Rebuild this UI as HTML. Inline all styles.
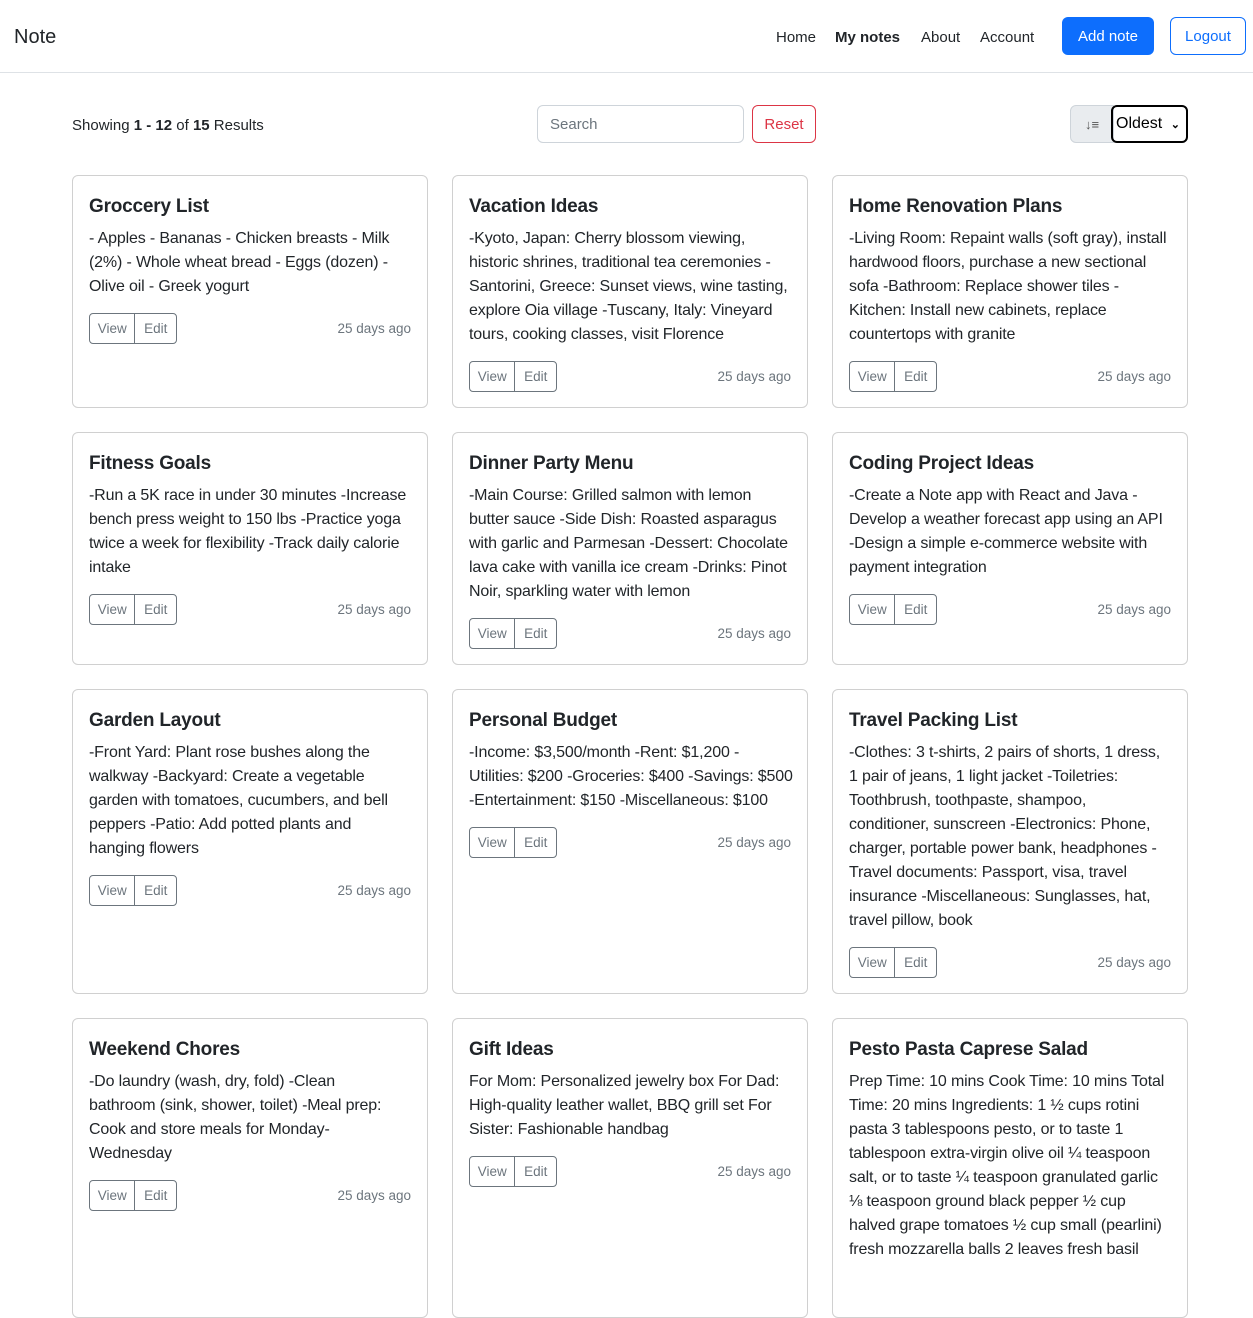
<!DOCTYPE html>
<html><head><meta charset="utf-8">
<style>
*{box-sizing:border-box;margin:0;padding:0}
body{width:1253px;height:1265px;overflow:hidden;background:#fff;font-family:"Liberation Sans",sans-serif;color:#212529;position:relative}
.nav{position:absolute;left:0;top:0;width:1253px;height:73px;border-bottom:1px solid #dee2e6}
.brand{position:absolute;left:14px;top:26px;font-size:20px}
.links{position:absolute;top:29px;font-size:15px}
.b{position:absolute;border-radius:6px;font-size:15px;display:flex;align-items:center;justify-content:center}
.card{position:absolute;width:356px;border:1px solid #d0d0d0;border-radius:6px;padding:19px 16px 16px}
.card h5{font-size:19px;font-weight:bold;line-height:24px;margin-bottom:8px;white-space:nowrap;letter-spacing:-0.2px}
.card p{font-size:16px;line-height:24px;white-space:nowrap;letter-spacing:-0.15px}
.ft{position:relative;height:31px;margin-top:14px}
.grp{display:flex;border:1px solid #6c757d;border-radius:4px;width:88px;height:31px;font-size:13.5px;color:#6c757d}
.grp span{display:flex;align-items:center;justify-content:center}
.grp span:first-child{width:46px;border-right:1px solid #6c757d}
.grp span:last-child{width:41px}
.ago{position:absolute;right:0;top:8px;font-size:13.5px;color:#6c757d}
</style></head><body>
<div class="nav">
<div class="brand">Note</div>
<div class="links" style="left:776px">Home</div>
<div class="links" style="left:835px;font-weight:bold">My notes</div>
<div class="links" style="left:921px">About</div>
<div class="links" style="left:980px">Account</div>
<div class="b" style="left:1062px;top:17px;width:92px;height:38px;background:#0d6efd;color:#fff">Add note</div>
<div class="b" style="left:1170px;top:17px;width:76px;height:38px;border:1px solid #0d6efd;color:#0d6efd">Logout</div>
</div>
<div style="position:absolute;left:72px;top:117px;font-size:15px">Showing <b>1 - 12</b> of <b>15</b> Results</div>
<div class="b" style="left:537px;top:105px;width:207px;height:38px;border:1px solid #ced4da;color:#6c757d;justify-content:flex-start;padding-left:12px">Search</div>
<div class="b" style="left:752px;top:105px;width:64px;height:38px;border:1px solid #dc3545;color:#dc3545">Reset</div>
<div class="b" style="left:1070px;top:105px;width:44px;height:38px;background:#e9ecef;border:1px solid #ced4da;border-radius:6px 0 0 6px;font-size:13px;color:#555">↓&#8801;</div>
<div class="b" style="left:1111px;top:105px;width:77px;height:38px;border:2px solid #000;color:#000;justify-content:flex-start;padding-left:3px;font-size:16px">Oldest<span style="position:absolute;right:6px;font-size:11px;font-weight:bold">&#8964;</span></div>

<div class="card" style="left:72px;top:175px;height:233px"><h5>Groccery List</h5><p>- Apples - Bananas - Chicken breasts - Milk<br>(2%) - Whole wheat bread - Eggs (dozen) -<br>Olive oil - Greek yogurt</p><div class="ft"><div class="grp"><span>View</span><span>Edit</span></div><div class="ago">25 days ago</div></div></div>
<div class="card" style="left:452px;top:175px;height:233px"><h5>Vacation Ideas</h5><p>-Kyoto, Japan: Cherry blossom viewing,<br>historic shrines, traditional tea ceremonies -<br>Santorini, Greece: Sunset views, wine tasting,<br>explore Oia village -Tuscany, Italy: Vineyard<br>tours, cooking classes, visit Florence</p><div class="ft"><div class="grp"><span>View</span><span>Edit</span></div><div class="ago">25 days ago</div></div></div>
<div class="card" style="left:832px;top:175px;height:233px"><h5>Home Renovation Plans</h5><p>-Living Room: Repaint walls (soft gray), install<br>hardwood floors, purchase a new sectional<br>sofa -Bathroom: Replace shower tiles -<br>Kitchen: Install new cabinets, replace<br>countertops with granite</p><div class="ft"><div class="grp"><span>View</span><span>Edit</span></div><div class="ago">25 days ago</div></div></div>

<div class="card" style="left:72px;top:432px;height:233px"><h5>Fitness Goals</h5><p>-Run a 5K race in under 30 minutes -Increase<br>bench press weight to 150 lbs -Practice yoga<br>twice a week for flexibility -Track daily calorie<br>intake</p><div class="ft"><div class="grp"><span>View</span><span>Edit</span></div><div class="ago">25 days ago</div></div></div>
<div class="card" style="left:452px;top:432px;height:233px"><h5>Dinner Party Menu</h5><p>-Main Course: Grilled salmon with lemon<br>butter sauce -Side Dish: Roasted asparagus<br>with garlic and Parmesan -Dessert: Chocolate<br>lava cake with vanilla ice cream -Drinks: Pinot<br>Noir, sparkling water with lemon</p><div class="ft"><div class="grp"><span>View</span><span>Edit</span></div><div class="ago">25 days ago</div></div></div>
<div class="card" style="left:832px;top:432px;height:233px"><h5>Coding Project Ideas</h5><p>-Create a Note app with React and Java -<br>Develop a weather forecast app using an API<br>-Design a simple e-commerce website with<br>payment integration</p><div class="ft"><div class="grp"><span>View</span><span>Edit</span></div><div class="ago">25 days ago</div></div></div>

<div class="card" style="left:72px;top:689px;height:305px"><h5>Garden Layout</h5><p>-Front Yard: Plant rose bushes along the<br>walkway -Backyard: Create a vegetable<br>garden with tomatoes, cucumbers, and bell<br>peppers -Patio: Add potted plants and<br>hanging flowers</p><div class="ft"><div class="grp"><span>View</span><span>Edit</span></div><div class="ago">25 days ago</div></div></div>
<div class="card" style="left:452px;top:689px;height:305px"><h5>Personal Budget</h5><p>-Income: $3,500/month -Rent: $1,200 -<br>Utilities: $200 -Groceries: $400 -Savings: $500<br>-Entertainment: $150 -Miscellaneous: $100</p><div class="ft"><div class="grp"><span>View</span><span>Edit</span></div><div class="ago">25 days ago</div></div></div>
<div class="card" style="left:832px;top:689px;height:305px"><h5>Travel Packing List</h5><p>-Clothes: 3 t-shirts, 2 pairs of shorts, 1 dress,<br>1 pair of jeans, 1 light jacket -Toiletries:<br>Toothbrush, toothpaste, shampoo,<br>conditioner, sunscreen -Electronics: Phone,<br>charger, portable power bank, headphones -<br>Travel documents: Passport, visa, travel<br>insurance -Miscellaneous: Sunglasses, hat,<br>travel pillow, book</p><div class="ft"><div class="grp"><span>View</span><span>Edit</span></div><div class="ago">25 days ago</div></div></div>

<div class="card" style="left:72px;top:1018px;height:300px"><h5>Weekend Chores</h5><p>-Do laundry (wash, dry, fold) -Clean<br>bathroom (sink, shower, toilet) -Meal prep:<br>Cook and store meals for Monday-<br>Wednesday</p><div class="ft"><div class="grp"><span>View</span><span>Edit</span></div><div class="ago">25 days ago</div></div></div>
<div class="card" style="left:452px;top:1018px;height:300px"><h5>Gift Ideas</h5><p>For Mom: Personalized jewelry box For Dad:<br>High-quality leather wallet, BBQ grill set For<br>Sister: Fashionable handbag</p><div class="ft"><div class="grp"><span>View</span><span>Edit</span></div><div class="ago">25 days ago</div></div></div>
<div class="card" style="left:832px;top:1018px;height:300px"><h5>Pesto Pasta Caprese Salad</h5><p>Prep Time: 10 mins Cook Time: 10 mins Total<br>Time: 20 mins Ingredients: 1 ½ cups rotini<br>pasta 3 tablespoons pesto, or to taste 1<br>tablespoon extra-virgin olive oil ¼ teaspoon<br>salt, or to taste ¼ teaspoon granulated garlic<br>⅛ teaspoon ground black pepper ½ cup<br>halved grape tomatoes ½ cup small (pearlini)<br>fresh mozzarella balls 2 leaves fresh basil</p></div>
</body></html>
